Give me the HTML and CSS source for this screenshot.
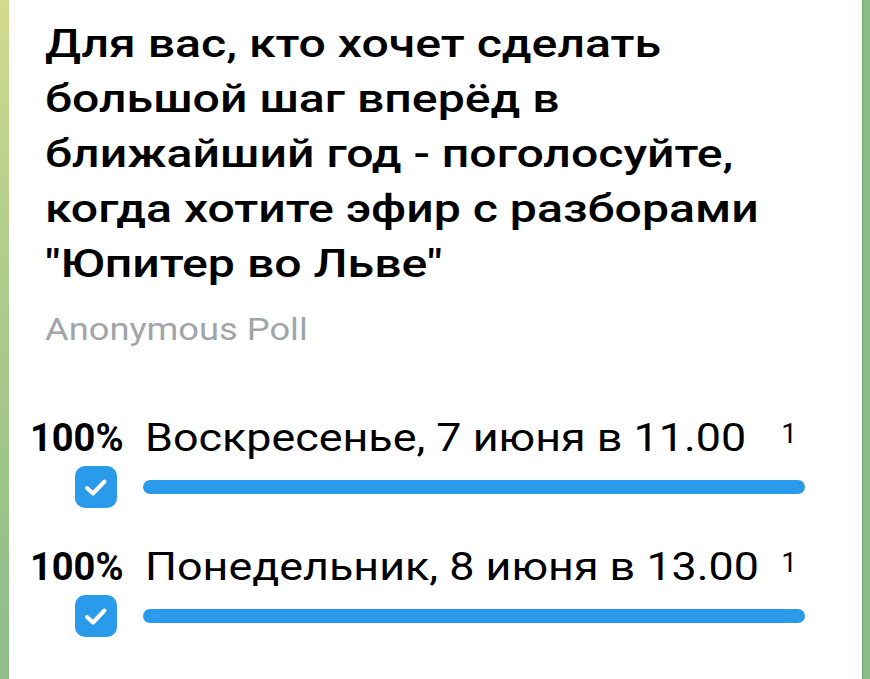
FILE: index.html
```html
<!DOCTYPE html>
<html lang="ru">
<head>
<meta charset="utf-8">
<title>Poll</title>
<link rel="stylesheet" href="styles.css">
</head>
<body>
<div class="card">
  <div class="question"><span class="wide">Для вас, кто хочет сделать большой шаг вперёд в ближайший год - поголосуйте, когда хотите эфир с разборами "Юпитер во Льве"</span></div>
  <div class="poll-type"><span class="wide">Anonymous Poll</span></div>
  <div class="options">
    <div class="option">
      <div class="percent">100%</div>
      <div class="label"><span class="wide">Воскресенье, 7 июня в 11.00</span></div>
      <div class="count">1</div>
      <div class="check">
        <svg viewBox="0 0 42 42" width="42" height="42"><rect x="0" y="0" width="42" height="42" rx="10" fill="#2a9aea"/><path d="M12 22 L18 27.5 L29.5 15.5" fill="none" stroke="#fff" stroke-width="4" stroke-linecap="round" stroke-linejoin="round"/></svg>
      </div>
      <div class="bar"></div>
    </div>
    <div class="option">
      <div class="percent">100%</div>
      <div class="label"><span class="wide">Понедельник, 8 июня в 13.00</span></div>
      <div class="count">1</div>
      <div class="check">
        <svg viewBox="0 0 42 42" width="42" height="42"><rect x="0" y="0" width="42" height="42" rx="10" fill="#2a9aea"/><path d="M12 22 L18 27.5 L29.5 15.5" fill="none" stroke="#fff" stroke-width="4" stroke-linecap="round" stroke-linejoin="round"/></svg>
      </div>
      <div class="bar"></div>
    </div>
  </div>
</div>
</body>
</html>
```
FILE: styles.css
```css
html, body {
  margin: 0;
  height: 100%;
}
body {
  background: radial-gradient(circle at 0 0, #d3da8f 0, #b4cf8b 220px, #a2c78a 420px, #8fbf89 620px, #8bbd88 900px);
  font-family: Roboto, "Noto Sans", "Liberation Sans", sans-serif;
  overflow: hidden;
}
.card {
  box-sizing: border-box;
  margin: 0 8px 0 9px;
  height: 100%;
  background: #ffffff;
  box-shadow: 1px 0 1px rgba(0,0,0,0.12);
  padding: 17px 57px 0 21px;
}
.wide {
  display: inline-block;
  transform: scaleX(1.2);
  transform-origin: 0 0;
}
.question {
  padding-left: 15px;
  font-size: 39px;
  line-height: 55px;
  font-weight: 500;
  color: #000;
}
.question .wide {
  width: 590px;
  transform: scaleX(1.235);
}
.poll-type {
  margin-top: 18px;
  padding-left: 15px;
  font-size: 31px;
  line-height: 40px;
  color: #a1a5aa;
}
.poll-type .wide {
  transform: scaleX(1.17);
}
.options {
  margin-top: 66px;
  display: flex;
  flex-direction: column;
  gap: 37px;
}
.option {
  display: grid;
  grid-template-columns: 92px 1fr auto;
  column-gap: 21px;
  row-gap: 6px;
  align-items: center;
}
.percent {
  font-size: 38px;
  line-height: 44px;
  font-weight: 700;
  color: #000;
  text-align: right;
}
.label {
  font-size: 38px;
  line-height: 44px;
  color: #000;
  padding-left: 2px;
  white-space: nowrap;
}
.label .wide {
  transform: scaleX(1.18);
}
.count {
  align-self: start;
  font-size: 28px;
  line-height: 35px;
  color: #000;
  padding-right: 8px;
}
.check {
  justify-self: end;
  margin-right: 5px;
  width: 42px;
  height: 42px;
}
.check svg {
  display: block;
}
.bar {
  grid-column: 2 / 4;
  height: 14px;
  border-radius: 7px;
  background: #2a9aea;
}
```
